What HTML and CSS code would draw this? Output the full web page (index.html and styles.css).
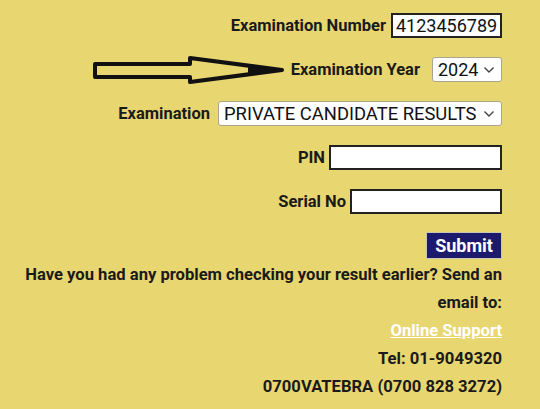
FILE: index.html
```html
<!DOCTYPE html>
<html>
<head>
<meta charset="utf-8">
<link rel="stylesheet" href="styles.css">
</head>
<body>
<div class="page">
  <form class="form">
    <div class="row">
      <label class="lbl">Examination Number</label>
      <input class="field num" type="text" value="4123456789">
    </div>
    <div class="row">
      <svg class="arrow" width="196" height="28" viewBox="0 0 196 28">
        <path d="M3 8 L98 8 L98 2 L190 14 L98 26 L98 21 L3 21 Z" fill="none" stroke="#111" stroke-width="4" stroke-linejoin="round"/>
        <path d="M156 11 L190 14 L156 18 Z" fill="#111"/>
      </svg>
      <label class="lbl">Examination Year</label>
      <span class="sel year"><select><option>2024</option></select><svg class="chev" width="12" height="8" viewBox="0 0 12 8"><path d="M1.5 1.5 L6 6 L10.5 1.5" fill="none" stroke="#444" stroke-width="1.4"/></svg></span>
    </div>
    <div class="row">
      <label class="lbl wide">Examination</label>
      <span class="sel exam"><select><option>PRIVATE CANDIDATE RESULTS</option></select><svg class="chev" width="12" height="8" viewBox="0 0 12 8"><path d="M1.5 1.5 L6 6 L10.5 1.5" fill="none" stroke="#444" stroke-width="1.4"/></svg></span>
    </div>
    <div class="row">
      <label class="lbl">PIN</label>
      <input class="field pin" type="text">
    </div>
    <div class="row">
      <label class="lbl">Serial No</label>
      <input class="field serial" type="text">
    </div>
    <div class="row">
      <button class="submit" type="button">Submit</button>
    </div>
  </form>
  <div class="info">
    <p>Have you had any problem checking your result earlier? Send an email to:</p>
    <p><a class="link" href="#">Online Support</a></p>
    <p>Tel: 01-9049320</p>
    <p>0700VATEBRA (0700 828 3272)</p>
  </div>
</div>
</body>
</html>
```

FILE: styles.css
```css
html, body {
  margin: 0;
  padding: 0;
  background: #e8d670;
}
body {
  font-family: Roboto, "Liberation Sans", sans-serif;
  color: #1a1a1a;
}
.page {
  width: 540px;
  height: 409px;
  box-sizing: border-box;
  padding: 13px 38px 0 20px;
  background: #e8d670;
}
.form {
  display: flex;
  flex-direction: column;
  gap: 19px;
}
.row {
  display: flex;
  justify-content: flex-end;
  align-items: center;
  gap: 5px;
  height: 25px;
}
.lbl {
  font-weight: 700;
  font-size: 16.5px;
}
.lbl.wide {
  margin-right: 3px;
}
.field {
  box-sizing: border-box;
  height: 25px;
  border: 2px solid #222;
  border-radius: 0;
  background: #fff;
  padding: 0 3px;
  font-family: Roboto, "Liberation Sans", sans-serif;
  font-size: 18px;
  color: #111;
  outline: none;
}
.num { width: 111px; }
.pin { width: 173px; margin-left: -1px; }
.serial { width: 152px; margin-left: -1px; }
.sel {
  display: flex;
  align-items: center;
  box-sizing: border-box;
  height: 25px;
  background: #fff;
  border: 1px solid #a9a48c;
  border-radius: 3px;
  padding: 0 6px 0 5px;
}
.sel select {
  flex: 1;
  min-width: 0;
  appearance: none;
  -webkit-appearance: none;
  border: none;
  background: transparent;
  padding: 0;
  margin: 0;
  font-family: Roboto, "Liberation Sans", sans-serif;
  font-size: 18.4px;
  color: #111;
  outline: none;
}
.year select { font-size: 18px; }
.chev { flex: none; margin-left: 4px; }
.year { width: 70px; margin-left: 7px; }
.exam { width: 284px; }
.arrow { margin-right: -2px; }
.submit {
  box-sizing: border-box;
  height: 27px;
  width: 76px;
  padding: 0;
  background: #1c1a6c;
  color: #fff;
  border: 1px solid #c9c7b0;
  font-family: Roboto, "Liberation Sans", sans-serif;
  font-weight: 700;
  font-size: 18px;
}
.info {
  margin-top: 3px;
  text-align: right;
  font-weight: 700;
  font-size: 16.6px;
  line-height: 28px;
}
.info p {
  margin: 0;
}
.link {
  color: #fff;
  text-decoration: underline;
}
```
